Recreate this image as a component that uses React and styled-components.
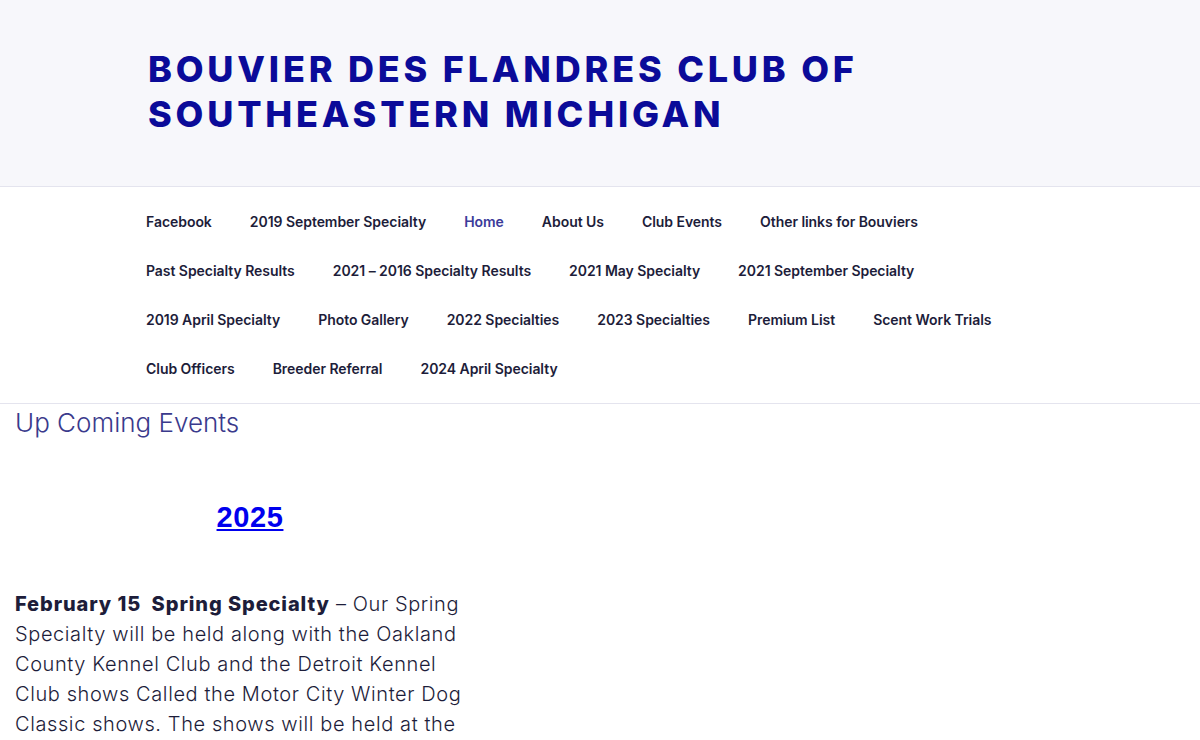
import React from 'react'
import styled, { createGlobalStyle } from 'styled-components'

const Global = createGlobalStyle`
  html, body { margin: 0; padding: 0; background: #fff; }
  body { font-family: Inter, "Noto Sans", sans-serif; color: #1d1d3a; }
  * { box-sizing: border-box; }
`

const navRows = [
  'Facebook', '2019 September Specialty', 'Home', 'About Us', 'Club Events', 'Other links for Bouviers',
  'Past Specialty Results', '2021 – 2016 Specialty Results', '2021 May Specialty', '2021 September Specialty',
  '2019 April Specialty', 'Photo Gallery', '2022 Specialties', '2023 Specialties', 'Premium List', 'Scent Work Trials',
  'Club Officers', 'Breeder Referral', '2024 April Specialty',
]

const App = () => {
  return (
    <Page>
      <Global />
      <Header>
        <SiteTitle>Bouvier des Flandres Club of<br />Southeastern Michigan</SiteTitle>
      </Header>
      <Nav>
        <NavList>
          {navRows.map((item, i) => (
            <NavItem key={i} $current={item === 'Home'}>{item}</NavItem>
          ))}
        </NavList>
      </Nav>
      <Content>
        <PageTitle>Up Coming Events</PageTitle>
        <Year><a href="#">2025</a></Year>
        <Para>
          <strong>February 15&nbsp; Spring Specialty</strong> – Our Spring Specialty will be held along with the
          Oakland County Kennel Club and the Detroit Kennel Club shows Called the Motor City Winter Dog Classic
          shows. The shows will be held at the Suburban Collection Showplace in Novi, Michigan.
        </Para>
      </Content>
    </Page>
  )
}

const Page = styled.div`
  width: 1200px;
  height: 740px;
  overflow: hidden;
`
const Header = styled.header`
  background-color: #f7f7fb;
  border-bottom: 1px solid #e4e4ee;
  height: 187px;
  padding: 47px 0 0 148px;
`
const SiteTitle = styled.h1`
  margin: 0;
  font-family: Inter, "Noto Sans", sans-serif;
  font-size: 36px;
  font-weight: 800;
  line-height: 45px;
  letter-spacing: 3.8px;
  text-transform: uppercase;
  color: #0b0b99;
`
const Nav = styled.nav`
  border-bottom: 1px solid #e4e4ee;
  padding: 10px 0 10px 146px;
`
const NavList = styled.ul`
  list-style: none;
  margin: 0;
  padding: 0;
  display: flex;
  flex-wrap: wrap;
  column-gap: 38px;
  max-width: 900px;
`
const NavItem = styled.li`
  font-size: 14px;
  font-weight: 600;
  line-height: 49px;
  letter-spacing: -0.05px;
  color: ${p => (p.$current ? '#3b3b9a' : '#1d1d3a')};
`
const Content = styled.main`
  width: 485px;
  padding-left: 15px;
`
const PageTitle = styled.h2`
  margin: 0;
  font-size: 26px;
  font-weight: 300;
  line-height: 38px;
  color: #3a3a8c;
`
const Year = styled.h3`
  margin: 59px 0 0;
  text-align: center;
  font-family: "Liberation Sans", Arial, sans-serif;
  font-size: 29px;
  font-weight: 700;
  line-height: 32px;
  letter-spacing: 0.6px;
  a { color: #0000ee; text-decoration: underline; }
`
const Para = styled.p`
  margin: 56px 0 0;
  font-size: 20px;
  font-weight: 300;
  line-height: 30px;
  letter-spacing: 0.6px;
  color: #1d1d3a;
  strong { font-weight: 800; letter-spacing: 0.9px; }
`

export default App
